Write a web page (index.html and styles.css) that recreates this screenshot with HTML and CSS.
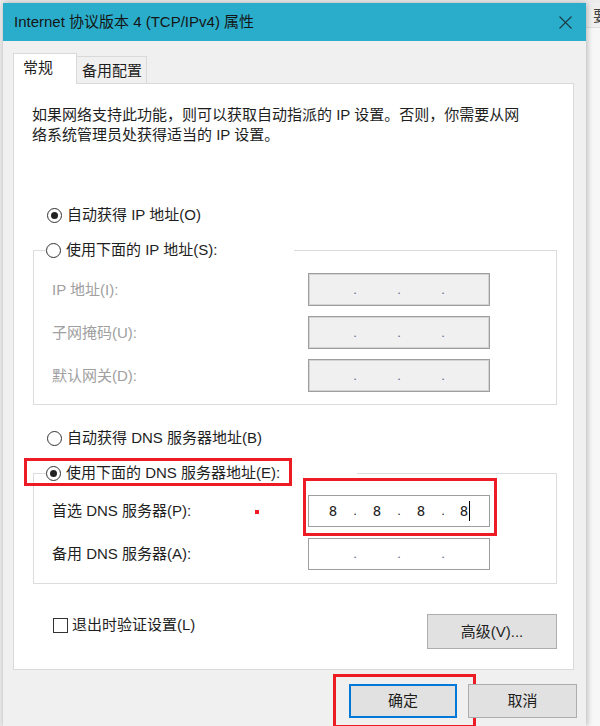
FILE: index.html
```html
<!DOCTYPE html>
<html lang="zh-CN">
<head>
    <meta charset="UTF-8">
    <title>Internet 协议版本 4 (TCP/IPv4) 属性</title>
    <link rel="stylesheet" href="styles.css">
</head>
<body>

<div class="screen">
    <div class="dialog">
        <div class="titlebar">
            <span class="title">Internet 协议版本 4 (TCP/IPv4) 属性</span>
            <svg class="close" width="13" height="13" viewBox="0 0 13 13">
                <path d="M0.5 0.5 L12.5 12.5 M12.5 0.5 L0.5 12.5" stroke="#1b3a44" stroke-width="1.1" fill="none"/>
            </svg>
        </div>

        <div class="body">
            <div class="tabs">
                <div class="tab active">常规</div>
                <div class="tab">备用配置</div>
            </div>

            <div class="panel">
                <p class="desc">如果网络支持此功能，则可以获取自动指派的 IP 设置。否则，你需要从网<br>络系统管理员处获得适当的 IP 设置。</p>

                <label class="option first"><span class="radio on"></span>自动获得 IP 地址(O)</label>

                <fieldset class="group ip-group">
                    <legend class="legend"><span class="radio"></span>使用下面的 IP 地址(S):</legend>
                    <div class="row">
                        <span class="label off">IP 地址(I):</span>
                        <span class="field off"><i>&nbsp;</i><b>.</b><i>&nbsp;</i><b>.</b><i>&nbsp;</i><b>.</b><i>&nbsp;</i></span>
                    </div>
                    <div class="row">
                        <span class="label off">子网掩码(U):</span>
                        <span class="field off"><i>&nbsp;</i><b>.</b><i>&nbsp;</i><b>.</b><i>&nbsp;</i><b>.</b><i>&nbsp;</i></span>
                    </div>
                    <div class="row">
                        <span class="label off">默认网关(D):</span>
                        <span class="field off"><i>&nbsp;</i><b>.</b><i>&nbsp;</i><b>.</b><i>&nbsp;</i><b>.</b><i>&nbsp;</i></span>
                    </div>
                </fieldset>

                <label class="option dns-auto"><span class="radio"></span>自动获得 DNS 服务器地址(B)</label>

                <fieldset class="group dns-group">
                    <legend class="legend marked"><span class="radio on"></span>使用下面的 DNS 服务器地址(E):</legend>
                    <div class="row dns-row">
                        <span class="label">首选 DNS 服务器(P):</span>
                        <span class="dot-mark"></span>
                        <span class="field filled marked"><i>8</i><b>.</b><i>8</i><b>.</b><i>8</i><b>.</b><i>8<span class="caret"></span></i></span>
                    </div>
                    <div class="row dns-row">
                        <span class="label">备用 DNS 服务器(A):</span>
                        <span class="field"><i>&nbsp;</i><b>.</b><i>&nbsp;</i><b>.</b><i>&nbsp;</i><b>.</b><i>&nbsp;</i></span>
                    </div>
                </fieldset>

                <div class="extra">
                    <label class="check"><span class="box"></span>退出时验证设置(L)</label>
                    <button class="btn advanced" type="button">高级(V)...</button>
                </div>
            </div>

            <div class="actions">
                <button class="btn ok" type="button">确定</button>
                <button class="btn" type="button">取消</button>
            </div>
        </div>
    </div>

    <div class="side">
        <div class="side-head">要</div>
    </div>
</div>

</body>
</html>
```

FILE: styles.css
```css
html, body {
    margin: 0;
    height: 100%;
    overflow: hidden;
}
body {
    font-family: "Liberation Sans", "Noto Sans CJK SC", sans-serif;
    font-size: 15px;
    line-height: 20px;
    color: #1e1e1e;
    background-color: #e9e9e9;
}
.screen {
    display: flex;
    height: 726px;
    padding: 3px 0 0 3px;
    box-sizing: border-box;
    background-color: #ececec;
}
.dialog {
    width: 583px;
    display: flex;
    flex-direction: column;
    background-color: #f0f0f0;
    box-shadow: 1px 0 6px rgba(0, 0, 0, 0.28);
    position: relative;
    z-index: 1;
}
.titlebar {
    height: 38px;
    display: flex;
    align-items: center;
    justify-content: space-between;
    padding: 0 14px 0 11px;
    background-color: #2aadca;
}
.title {
    color: #151515;
}
.body {
    flex: 1;
    padding: 12px 0 0 10px;
}
.tabs {
    display: flex;
    align-items: flex-end;
    height: 30px;
}
.tab {
    box-sizing: border-box;
    height: 27px;
    width: 70px;
    padding: 4px 0 0 5px;
    border: 1px solid #d9d9d9;
    border-left: 0;
    border-bottom: 0;
    background-color: #f0f0f0;
}
.tab.active {
    width: 64px;
    height: 31px;
    margin-bottom: -1px;
    padding: 4px 0 0 9px;
    border-left: 1px solid #d9d9d9;
    background-color: #fff;
    position: relative;
    z-index: 1;
}
.panel {
    box-sizing: border-box;
    width: 561px;
    height: 587px;
    border: 1px solid #d9d9d9;
    background-color: #fff;
    display: flex;
    flex-direction: column;
}
.desc {
    margin: 21px 0 0 18px;
}
.option {
    display: flex;
    align-items: center;
    height: 20px;
    margin-left: 33px;
}
.option.first {
    margin-top: 60px;
}
.option.dns-auto {
    margin-top: 23px;
}
.radio {
    box-sizing: border-box;
    width: 15px;
    height: 15px;
    margin-right: 5px;
    border: 1px solid #333;
    border-radius: 50%;
    background-color: #fff;
    display: flex;
    align-items: center;
    justify-content: center;
    flex: none;
}
.radio.on::after {
    content: "";
    width: 7px;
    height: 7px;
    border-radius: 50%;
    background-color: #222;
}
.group {
    box-sizing: border-box;
    width: 524px;
    margin: 15px 0 0 19px;
    padding: 12px 0 12px 18px;
    border: 1px solid #dcdcdc;
    min-width: 0;
}
.dns-group {
    padding-bottom: 13px;
}
.legend {
    display: flex;
    align-items: center;
    height: 20px;
    padding: 0;
    margin-left: -6px;
    width: 248px;
    background-color: #fff;
}
.dns-group .legend {
    width: 311px;
}
.row {
    display: flex;
    align-items: center;
    height: 33px;
    position: relative;
}
.row + .row {
    margin-top: 10px;
}
.ip-group .row:first-of-type {
    margin-top: 1px;
}
.dns-row {
    height: 32px;
}
.dns-row + .dns-row {
    margin-top: 11px;
}
.label {
    width: 256px;
    flex: none;
}
.label.off {
    color: #a0a0a0;
}
.field {
    box-sizing: border-box;
    width: 182px;
    height: 100%;
    padding-left: 4px;
    display: flex;
    align-items: center;
    border: 1px solid #9e9e9e;
    background-color: #fff;
    position: relative;
}
.field.off {
    background-color: #f0f0f0;
    box-shadow: inset 0 0 0 1px #d4d4d4;
}
.field i {
    width: 40px;
    text-align: center;
    font-style: normal;
    font-family: "DejaVu Sans Mono", monospace;
    font-size: 14px;
}
.field b {
    width: 4px;
    text-align: center;
    font-weight: normal;
    color: #5a6a8c;
    font-size: 13px;
}
.field.filled b {
    color: #1e1e1e;
}
.caret {
    display: inline-block;
    width: 1px;
    height: 20px;
    margin-left: 1px;
    vertical-align: -5px;
    background-color: #000;
}
.marked {
    position: relative;
}
.legend.marked::after {
    content: "";
    position: absolute;
    left: -22px;
    top: -5px;
    width: 268px;
    height: 28px;
    box-sizing: border-box;
    border: 3px solid #ed1c24;
}
.field.marked::after {
    content: "";
    position: absolute;
    left: -6px;
    top: -18px;
    width: 194px;
    height: 58px;
    box-sizing: border-box;
    border: 3px solid #ed1c24;
}
.dot-mark {
    position: absolute;
    left: 203px;
    top: 15px;
    width: 4px;
    height: 4px;
    background-color: #ed1c24;
}
.extra {
    display: flex;
    justify-content: space-between;
    align-items: flex-start;
    margin-top: 30px;
}
.check {
    display: flex;
    align-items: center;
    margin: 1px 0 0 39px;
}
.box {
    box-sizing: border-box;
    width: 15px;
    height: 15px;
    margin-right: 4px;
    border: 1px solid #333;
    background-color: #fff;
}
.btn {
    box-sizing: border-box;
    height: 34px;
    width: 109px;
    border: 1px solid #adadad;
    background-color: #e1e1e1;
    font: inherit;
    color: #1e1e1e;
    padding: 0;
    position: relative;
}
.btn.advanced {
    width: 130px;
    height: 35px;
    margin-right: 16px;
}
.btn.ok {
    width: 108px;
    border: 2px solid #0078d7;
}
.btn.ok::after {
    content: "";
    position: absolute;
    left: -18px;
    top: -12px;
    width: 143px;
    height: 54px;
    box-sizing: border-box;
    border: 3px solid #ed1c24;
}
.actions {
    display: flex;
    justify-content: flex-end;
    gap: 11px;
    padding: 14px 9px 0 0;
}
.side {
    flex: 1;
    overflow: hidden;
    background-color: #f7f7f7;
}
.side-head {
    height: 25px;
    padding: 3px 0 0 7px;
    box-sizing: border-box;
    border-bottom: 1px solid #dedede;
    background-color: #efefef;
    white-space: nowrap;
    color: #444;
}
```
